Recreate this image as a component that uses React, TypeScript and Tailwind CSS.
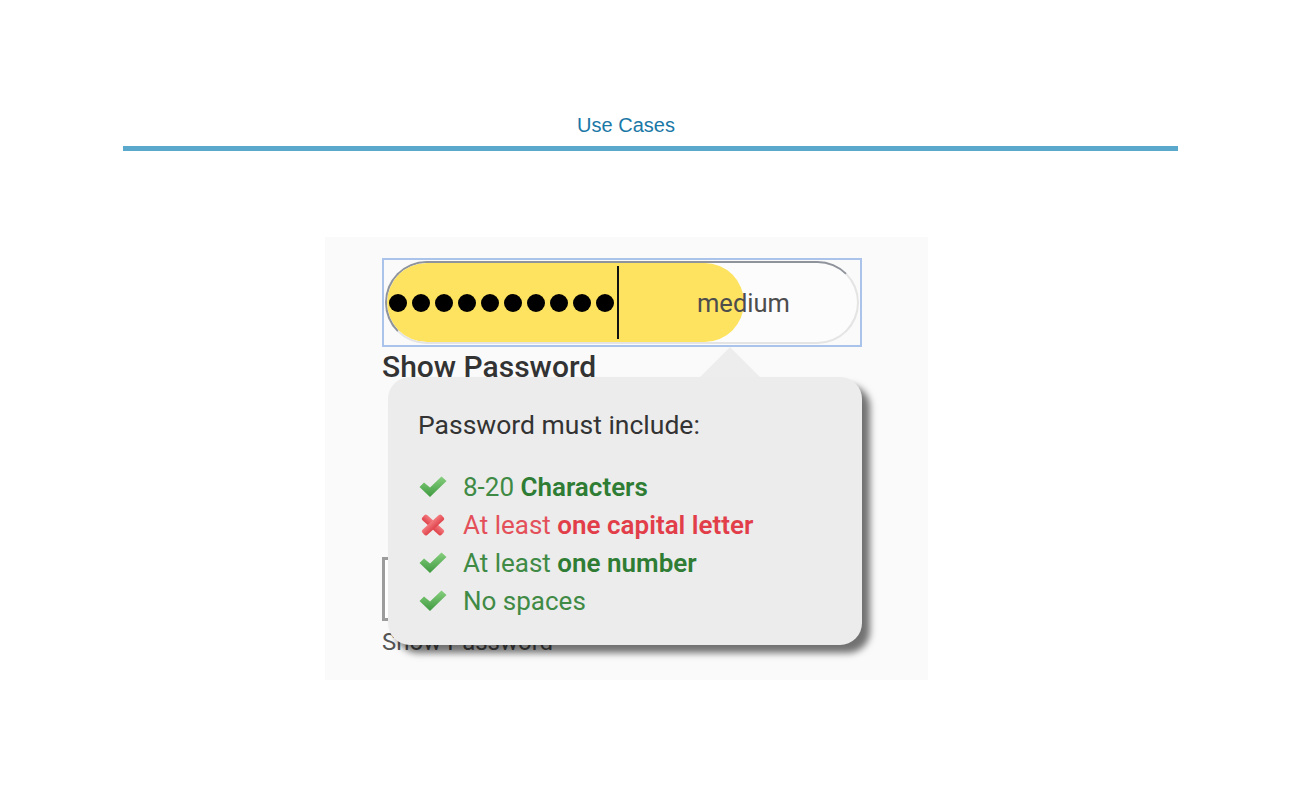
import React from "react";

const Check = () => (
  <svg width="28" height="22" viewBox="0 0 28 22">
    <defs>
      <linearGradient id="chk" x1="0" y1="0" x2="0" y2="1">
        <stop offset="0" stopColor="#86cf7e" />
        <stop offset="1" stopColor="#3f9a40" />
      </linearGradient>
    </defs>
    <path d="M0.5 11 L5 6.5 L11 11.5 L22.5 0.5 L27.5 5 L11 21 Z" fill="url(#chk)" />
  </svg>
);

const Cross = () => (
  <svg width="28" height="24" viewBox="0 0 28 24">
    <defs>
      <linearGradient id="crs" x1="0" y1="0" x2="0" y2="1">
        <stop offset="0" stopColor="#f37a7e" />
        <stop offset="1" stopColor="#e0444c" />
      </linearGradient>
    </defs>
    <g fill="url(#crs)">
      <rect x="1" y="8.5" width="26" height="7" rx="2" transform="rotate(42 14 12)" />
      <rect x="1" y="8.5" width="26" height="7" rx="2" transform="rotate(-42 14 12)" />
    </g>
  </svg>
);

const rules = [
  { ok: true, light: "8-20 ", bold: "Characters" },
  { ok: false, light: "At least ", bold: "one capital letter" },
  { ok: true, light: "At least ", bold: "one number" },
  { ok: true, light: "No spaces", bold: "" },
];

export default function App() {
  return (
    <div className="min-h-[800px] bg-white font-['Liberation_Sans',Arial,sans-serif]">
      <div className="flex flex-col items-center pt-[111px]">
        <div className="flex w-[1055px] justify-center pr-[48px]">
          <div className="text-[20px] leading-[28px] text-[#1a78a6]">Use Cases</div>
        </div>
        <div className="mt-[7px] h-[5px] w-[1055px] bg-[#5aa8cc]" />
      </div>

      <div className="relative ml-[325px] mt-[86px] h-[443px] w-[603px] bg-[#fafafa] pl-[57px] pt-[21px] font-['Roboto',sans-serif]">
        <div className="h-[89px] w-[480px] border-2 border-[#a9c3ea] p-px">
          <div className="relative flex h-full w-full items-center overflow-hidden rounded-full border-2 border-[#e4e4e4] border-l-[#8f939b] border-t-[#8f939b] bg-[#fcfcfc]">
            <div className="absolute inset-y-0 left-0 w-[357px] rounded-full bg-[#fde360]" />
            <div className="relative flex items-center gap-[5px] pl-[2px]">
              {Array.from({ length: 10 }).map((_, i) => (
                <span key={i} className="h-[18px] w-[18px] rounded-full bg-black" />
              ))}
            </div>
            <div className="relative ml-[3px] h-[73px] w-[2px] bg-[#111]" />
            <div className="relative ml-[78px] text-[25.5px] leading-[28px] text-[#4d4d4d]">medium</div>
          </div>
        </div>
        <div className="mt-[4px] text-[30px] font-medium leading-[32px] text-[#333]">Show Password</div>
        <div className="mt-[174px] h-[64px] w-[470px] border-[3px] border-[#9c9c9c] bg-white" />
        <div className="mt-[7px] text-[24px] leading-[28px] text-[#555]">Show Password</div>

        <div className="absolute left-[63px] top-[140px] h-[268px] w-[474px] rounded-[22px] bg-[#ececec] pl-[30px] pt-[30px] shadow-[8px_8px_7px_rgba(0,0,0,0.55)]">
          <div className="absolute left-[312px] top-[-30px] h-0 w-0 border-x-[30px] border-b-[30px] border-x-transparent border-b-[#ededed]" />
          <div className="text-[26.5px] leading-[36px] text-[#333]">Password must include:</div>
          <div className="mt-[25px] flex flex-col">
            {rules.map((r, i) => (
              <div key={i} className="flex h-[38px] items-center">
                <div className="flex w-[30px] justify-center">{r.ok ? <Check /> : <Cross />}</div>
                <div
                  className={`ml-[15px] text-[26px] leading-[30px] ${
                    r.ok ? "text-[#3f8a45]" : "text-[#e4505a]"
                  }`}
                >
                  {r.light}
                  {r.bold && (
                    <span className={`font-semibold ${r.ok ? "text-[#2f7d34]" : "text-[#e23e4a]"}`}>{r.bold}</span>
                  )}
                </div>
              </div>
            ))}
          </div>
        </div>
      </div>
    </div>
  );
}
